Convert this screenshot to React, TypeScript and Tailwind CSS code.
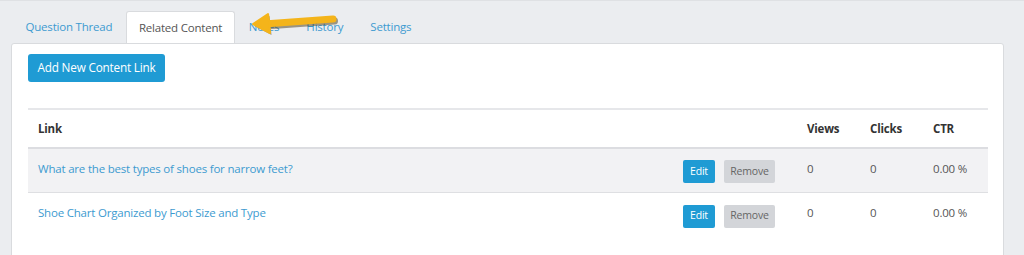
const rows = [
  { title: "What are the best types of shoes for narrow feet?", views: "0", clicks: "0", ctr: "0.00 %", shaded: true },
  { title: "Shoe Chart Organized by Foot Size and Type", views: "0", clicks: "0", ctr: "0.00 %", shaded: false },
];

const tabs = ["Question Thread", "Related Content", "Notes", "History", "Settings"];

function Arrow() {
  return (
    <svg
      className="absolute left-[248px] top-[8px]"
      width="92"
      height="26"
      viewBox="0 0 92 26"
    >
      <g opacity="0.45" transform="translate(1.5 2)">
        <path d="M16 15 L85 10" stroke="#3a2a00" strokeWidth="7" strokeLinecap="round" fill="none" />
        <path d="M5 15 L20 5 L22 24 Z" fill="#3a2a00" />
      </g>
      <path d="M16 15 L85 10" stroke="#f4b41a" strokeWidth="7" strokeLinecap="round" fill="none" />
      <path d="M5 15 L20 5 Q22 15 22 24 Z" fill="#f4b41a" strokeLinejoin="round" stroke="#f4b41a" strokeWidth="2" />
    </svg>
  );
}

export default function App() {
  return (
    <div className="relative h-[255px] w-[1024px] overflow-hidden border-t border-[#dfe1e4] bg-[#ebedf0] font-['Open_Sans',sans-serif] text-[11.5px] tracking-[-0.2px]">
      <div className="flex pl-[12px] pt-[10px]">
        {tabs.map((t) =>
          t === "Related Content" ? (
            <div
              key={t}
              className="relative z-10 -mb-px flex h-[32px] items-center rounded-t-[3px] border border-b-0 border-[#d9dbde] bg-white px-[12px] text-[#555]"
            >
              {t}
            </div>
          ) : (
            <div key={t} className="flex h-[32px] items-center px-[13.5px] text-[#3d9bd0]">
              {t}
            </div>
          )
        )}
      </div>
      <Arrow />
      <div className="ml-[11px] mr-[20px] h-[240px] rounded-t-[3px] border border-[#d9dbde] bg-white pl-[16px] pr-[15px] pt-[10px]">
        <button className="h-[28px] w-[137px] rounded-[3px] bg-[#1f9bd4] text-[11.75px] text-white">
          Add New Content Link
        </button>
        <div className="mt-[26px] border-t-2 border-[#e6e7ea]">
          <div className="grid h-[39px] grid-cols-[1fr_63px_63px_65px] items-center border-b-2 border-[#dcdde1] font-bold text-[#333]">
            <div className="pl-[10px]">Link</div>
            <div className="pl-[10px]">Views</div>
            <div className="pl-[10px]">Clicks</div>
            <div className="pl-[10px]">CTR</div>
          </div>
          {rows.map((r, i) => (
            <div
              key={r.title}
              className={`grid h-[44px] grid-cols-[1fr_63px_63px_65px] items-center text-[#555] ${i === 0 ? "border-b border-[#dedfe2] pb-[3px]" : "pb-[5px]"} ${r.shaded ? "bg-[#f2f2f4]" : "bg-white"}`}
            >
              <div className="flex items-center pl-[10px] pr-[22px]">
                <span className="text-[#3d9bd0]">{r.title}</span>
                <div className={`ml-auto flex gap-[9px] text-[10.5px] ${i === 0 ? "mt-[5px]" : "mt-[7px]"}`}>
                  <button className="h-[23px] w-[32px] rounded-[2px] bg-[#1f9bd4] text-white">Edit</button>
                  <button className="h-[23px] w-[51px] rounded-[2px] bg-[#d3d5d9] text-[#666]">Remove</button>
                </div>
              </div>
              <div className="pl-[10px]">{r.views}</div>
              <div className="pl-[10px]">{r.clicks}</div>
              <div className="pl-[10px]">{r.ctr}</div>
            </div>
          ))}
        </div>
      </div>
    </div>
  );
}
